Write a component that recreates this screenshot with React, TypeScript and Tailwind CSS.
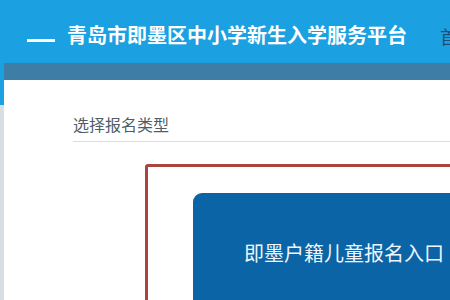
export default function App() {
  return (
    <div
      className="w-[450px] h-[300px] overflow-hidden bg-white flex flex-col"
      style={{ fontFamily: '"Noto Sans CJK SC", "Noto Sans", sans-serif' }}
    >
      {/* Header */}
      <div className="h-[63px] shrink-0 bg-[#1ba1e2] flex items-center whitespace-nowrap">
        <div className="ml-[27px] mt-[18px] w-[28px] h-[3px] bg-white shrink-0" />
        <h1 className="ml-[12px] mt-[6px] text-[20px] leading-[28px] font-bold text-white shrink-0">
          青岛市即墨区中小学新生入学服务平台
        </h1>
        <nav className="ml-[33px] mt-[10px] text-[18px] text-[#1f4e79] shrink-0">首页</nav>
      </div>

      {/* Sub bar */}
      <div className="h-[17px] shrink-0 flex">
        <div className="w-[4px] bg-[#1ba1e2]" />
        <div className="flex-1 bg-[#3e7ea6]" />
      </div>

      {/* Body */}
      <div className="flex flex-1 min-h-0">
        <div className="w-[4px] shrink-0 flex flex-col">
          <div className="h-[25px] bg-[#1ba1e2]" />
          <div className="flex-1 bg-[#d9dee3]" />
        </div>
        <main className="flex-1 min-w-0 pl-[69px]">
          <div className="pt-[33px] pb-[6px] border-b border-[#dcdfe2]">
            <h2 className="text-[16px] leading-[22px] text-[#4f5d69]">选择报名类型</h2>
          </div>

          <div className="ml-[72px] mt-[22px] w-[400px] h-[200px] border-[3px] border-[#a9443f] rounded-[3px] pl-[45px] pt-[26px]">
            <div className="w-[320px] h-[160px] bg-[#0b64a5] rounded-tl-[9px] pl-[51px] pt-[46px]">
              <p className="text-[20px] leading-[28px] text-[#eef5fb] whitespace-nowrap">即墨户籍儿童报名入口</p>
            </div>
          </div>
        </main>
      </div>
    </div>
  );
}
